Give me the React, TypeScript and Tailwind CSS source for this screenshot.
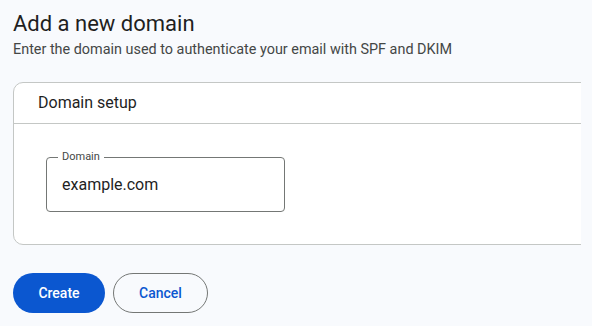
export default function App() {
  return (
    <div className="min-h-[326px] w-[592px] bg-[#f8fafd] font-['Roboto',sans-serif] text-[#1f1f1f]">
      <div className="w-[581px] overflow-hidden pl-[13px] pt-[8px]">
        <h1 className="text-[22px] leading-[32px] font-normal">Add a new domain</h1>
        <p className="text-[14.4px] leading-[20px] text-[#444746]">
          Enter the domain used to authenticate your email with SPF and DKIM
        </p>

        <div className="mt-[22px] w-[620px] rounded-[10px] border border-[#c4c7c5] bg-white">
          <div className="border-b border-[#c4c7c5] px-[24px] py-[10px] text-[16px] leading-[20px]">
            Domain setup
          </div>
          <div className="px-[32px] pt-[33px] pb-[32px]">
            <div className="relative h-[55px] w-[239px] rounded-[4px] border border-[#747775]">
              <span className="absolute -top-[8px] left-[11px] bg-white px-[4px] text-[11px] leading-[14px] text-[#444746]">
                Domain
              </span>
              <div className="pl-[15px] pt-[17px] text-[16px] leading-[20px]">example.com</div>
            </div>
          </div>
        </div>

        <div className="mt-[28px] flex gap-[8px]">
          <button className="h-[40px] w-[92px] rounded-full bg-[#0b57d0] text-[14px] font-medium text-white">
            Create
          </button>
          <button className="h-[40px] w-[95px] rounded-full border border-[#747775] text-[14px] font-medium text-[#0b57d0]">
            Cancel
          </button>
        </div>
      </div>
    </div>
  );
}
